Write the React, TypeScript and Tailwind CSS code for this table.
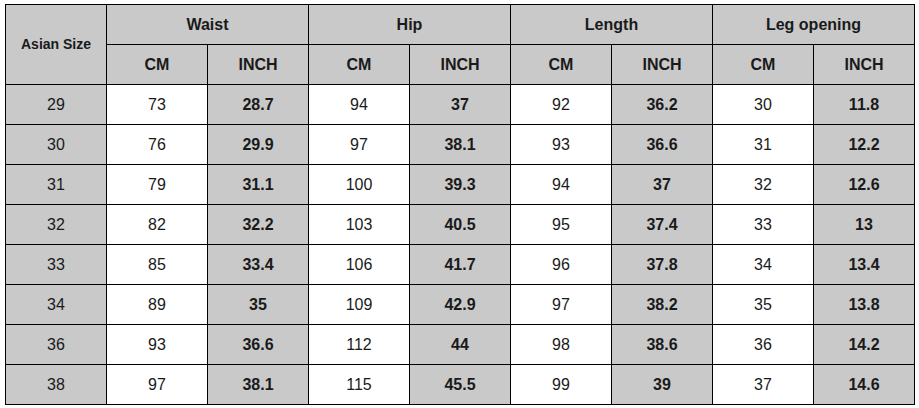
const groups = ["Waist", "Hip", "Length", "Leg opening"];

// size, then cm/inch pairs for waist, hip, length, leg opening
const rows: [string, string, string, string, string, string, string, string, string][] = [
  ["29", "73", "28.7", "94", "37", "92", "36.2", "30", "11.8"],
  ["30", "76", "29.9", "97", "38.1", "93", "36.6", "31", "12.2"],
  ["31", "79", "31.1", "100", "39.3", "94", "37", "32", "12.6"],
  ["32", "82", "32.2", "103", "40.5", "95", "37.4", "33", "13"],
  ["33", "85", "33.4", "106", "41.7", "96", "37.8", "34", "13.4"],
  ["34", "89", "35", "109", "42.9", "97", "38.2", "35", "13.8"],
  ["36", "93", "36.6", "112", "44", "98", "38.6", "36", "14.2"],
  ["38", "97", "38.1", "115", "45.5", "99", "39", "37", "14.6"],
];

const gray = "bg-[#c9c9c9]";

export default function App() {
  return (
    <div className="w-[919px] h-[408px] bg-white pl-[5px] pt-[4px] font-['Liberation_Sans',Arial,sans-serif] text-[#1a1a1a]">
      <div className="grid w-[910px] grid-cols-[repeat(9,100px)] grid-rows-[repeat(10,39px)] gap-px bg-black p-px">
        <div className={`${gray} row-span-2 flex items-center justify-center text-[14px] font-bold`}>
          Asian Size
        </div>
        {groups.map((g) => (
          <div key={g} className={`${gray} col-span-2 flex items-center justify-center text-[16px] font-bold`}>
            {g}
          </div>
        ))}
        {groups.map((g) => [
          <div key={g + "cm"} className={`${gray} flex items-center justify-center text-[16px] font-bold`}>
            CM
          </div>,
          <div key={g + "in"} className={`${gray} flex items-center justify-center text-[16px] font-bold`}>
            INCH
          </div>,
        ])}
        {rows.map((r) =>
          r.map((v, i) => {
            const isInch = i > 0 && i % 2 === 0;
            const isCm = i % 2 === 1;
            return (
              <div
                key={r[0] + "-" + i}
                className={`flex items-center justify-center text-[16px] ${
                  isCm ? "bg-white" : gray
                } ${isInch ? "font-bold" : ""}`}
              >
                {v}
              </div>
            );
          })
        )}
      </div>
    </div>
  );
}
